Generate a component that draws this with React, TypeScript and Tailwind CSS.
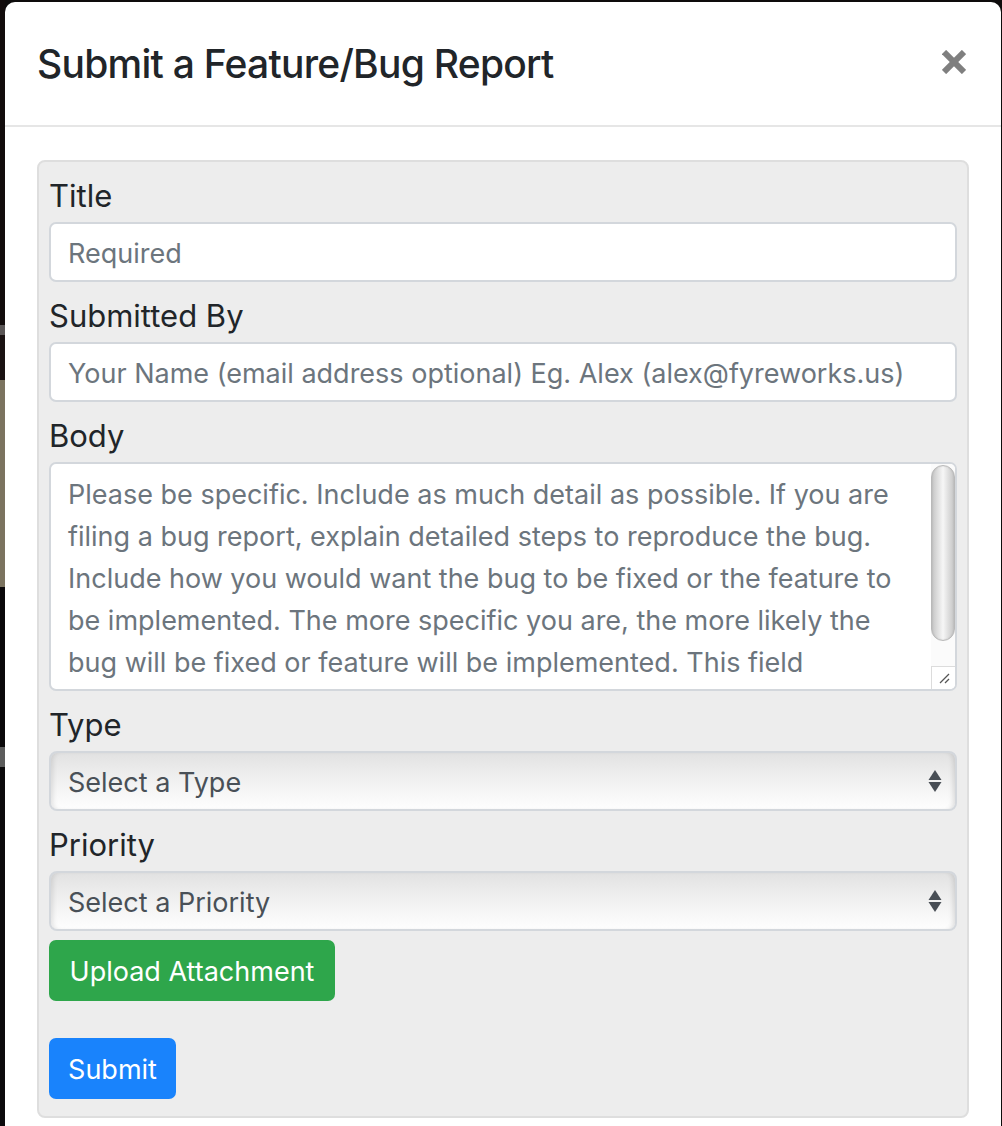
import React from "react";

const font = { fontFamily: 'Inter, "Noto Sans", "Liberation Sans", sans-serif' };

function Label({ children }: { children: React.ReactNode }) {
  return (
    <div className="h-[60px] pt-[11px] text-[31px] leading-[46px] text-[#212529]">{children}</div>
  );
}

function Input({ placeholder }: { placeholder: string }) {
  return (
    <div className="flex h-[60px] items-center rounded-[7px] border-2 border-[#d3d7dc] bg-white pl-[17px] pt-[3px] text-[27px] leading-[42px] whitespace-nowrap text-[#6c757d]">
      {placeholder}
    </div>
  );
}

function SelectBox({ text }: { text: string }) {
  return (
    <div className="flex h-[60px] items-center justify-between rounded-[8px] border-2 border-[#d3d7dc] bg-gradient-to-b from-[#e2e2e2] via-[#f1f1f1] to-[#fefefe] pl-[17px] pr-[12px] text-[27px] leading-[42px] text-[#495057] shadow-[inset_5px_0_5px_-3px_rgba(0,0,0,0.10),inset_-5px_0_5px_-3px_rgba(0,0,0,0.12)]">
      <span className="pt-[3px]">{text}</span>
      <svg width="14" height="24" viewBox="0 0 14 24" className="mr-[1px]">
        <path d="M7 1 L13.5 11 L0.5 11 Z" fill="#484e55" />
        <path d="M7 23 L13.5 13 L0.5 13 Z" fill="#484e55" />
      </svg>
    </div>
  );
}

export default function App() {
  const lines = [
    "Please be specific. Include as much detail as possible. If you are",
    "filing a bug report, explain detailed steps to reproduce the bug.",
    "Include how you would want the bug to be fixed or the feature to",
    "be implemented. The more specific you are, the more likely the",
    "bug will be fixed or feature will be implemented. This field",
  ];
  return (
    <div className="flex h-[1126px] w-[1002px] overflow-hidden bg-[#0e0c0c] pt-[2px]" style={font}>
      {/* backdrop strip on the left */}
      <div className="-mt-[2px] flex w-[5px] shrink-0 flex-col">
        <div className="h-[325px] bg-[#120c0c]" />
        <div className="h-[10px] bg-[#5a5656]" />
        <div className="h-[45px] bg-[#1a1212]" />
        <div className="h-[207px] bg-[#7b735f]" />
        <div className="h-[160px] bg-[#0a080a]" />
        <div className="h-[20px] bg-[#5c5c5c]" />
        <div className="flex-1 bg-[#0c0a0c]" />
      </div>

      {/* modal */}
      <div className="flex flex-1 flex-col rounded-t-[10px] bg-white">
        <div className="flex h-[125px] shrink-0 items-center justify-between border-b-2 border-[#e6e6e6] pl-[32px] pr-[35px]">
          <div className="pt-[1px] text-[39px] font-medium leading-[60px] tracking-[-0.75px] text-[#212529]">
            Submit a Feature/Bug Report
          </div>
          <svg width="24" height="24" viewBox="0 0 24 24" className="-mt-[4px]">
            <line x1="2" y1="2" x2="22" y2="22" stroke="#7f7f7f" strokeWidth="6" />
            <line x1="22" y1="2" x2="2" y2="22" stroke="#7f7f7f" strokeWidth="6" />
          </svg>
        </div>

        <div className="px-[32px] pt-[33px]">
          <div className="rounded-[8px] border-2 border-[#dedede] bg-[#ededed] px-[10px] pb-[17px]">
            <Label>Title</Label>
            <Input placeholder="Required" />
            <Label>Submitted By</Label>
            <Input placeholder="Your Name (email address optional) Eg. Alex (alex@fyreworks.us)" />
            <Label>Body</Label>
            <div className="flex h-[229px] overflow-hidden rounded-[7px] border-2 border-[#d3d7dc] bg-white">
              <div className="flex-1 overflow-hidden pl-[17px] pt-[10px] text-[27px] leading-[42px] text-[#6c757d]">
                {lines.map((l) => (
                  <div key={l} className="whitespace-nowrap">
                    {l}
                  </div>
                ))}
              </div>
              <div className="flex w-[24px] shrink-0 flex-col bg-[#fbfbfb]">
                <div className="mt-[1px] h-[176px] rounded-full border border-[#b9b9b9] bg-gradient-to-r from-[#c6c6c6] via-[#f6f6f6] to-[#c6c6c6] shadow-[inset_0_0_2px_rgba(0,0,0,0.15)]" />
                <div className="flex-1" />
                <div className="flex h-[23px] items-center justify-center border-l border-t border-[#dcdcdc] bg-white">
                  <svg width="14" height="14" viewBox="0 0 14 14">
                    <line x1="3" y1="12" x2="12" y2="3" stroke="#555" strokeWidth="1.3" />
                    <line x1="8" y1="12" x2="12" y2="8" stroke="#555" strokeWidth="1.3" />
                  </svg>
                </div>
              </div>
            </div>
            <Label>Type</Label>
            <SelectBox text="Select a Type" />
            <Label>Priority</Label>
            <SelectBox text="Select a Priority" />
            <div className="mt-[9px] flex h-[61px] w-[286px] items-center justify-center rounded-[7px] bg-[#2ea64b] pt-[3px] text-[27px] text-white">
              Upload Attachment
            </div>
            <div className="mt-[37px] flex h-[61px] w-[127px] items-center justify-center rounded-[7px] bg-[#1983fc] pt-[3px] text-[27px] text-white">
              Submit
            </div>
          </div>
        </div>
      </div>
      <div className="w-[1px] shrink-0 bg-[#0e0c0c]" />
    </div>
  );
}
